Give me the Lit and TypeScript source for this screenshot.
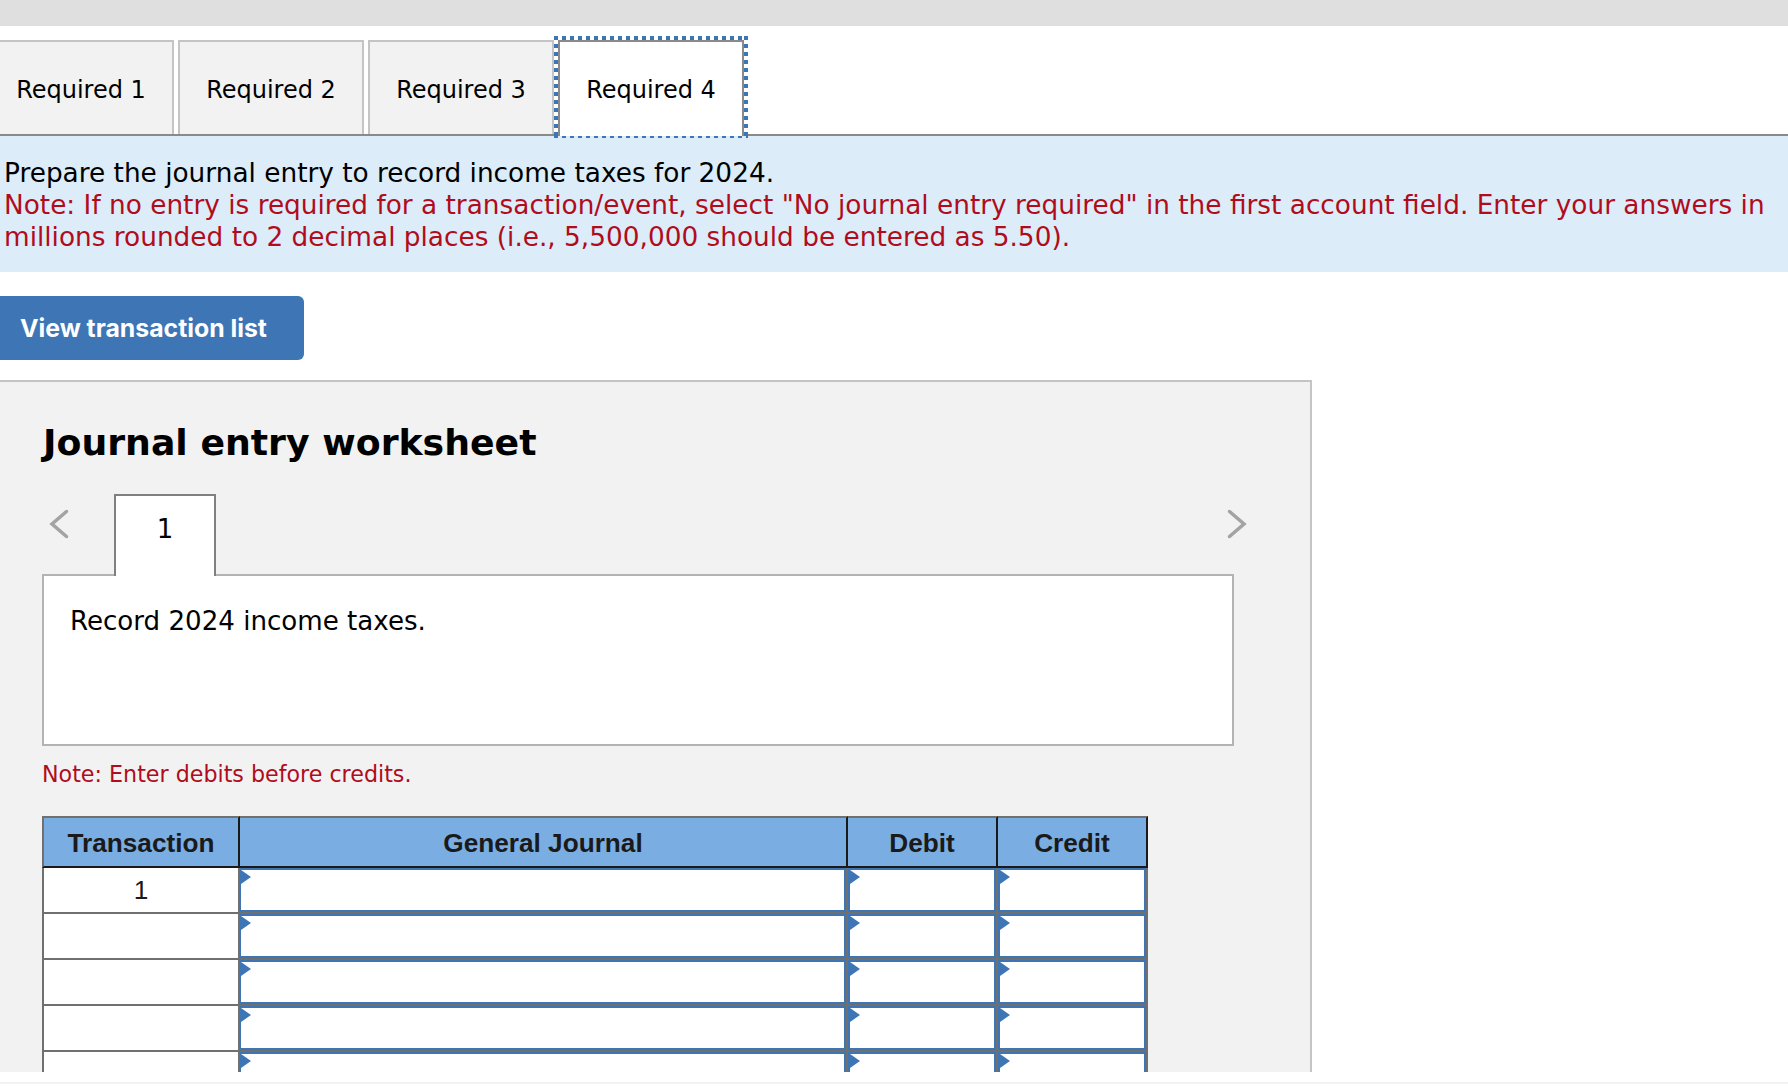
import { LitElement, html, css } from "lit";
import { customElement } from "lit/decorators.js";

@customElement("app-root")
export class AppRoot extends LitElement {
  static styles = css`
    :host { display: block; font-family: "DejaVu Sans", Verdana, sans-serif; color: #000; background: #fff; height: 1090px; overflow: hidden; }
    .frame { height: 1072px; overflow: hidden; }
    .foot { margin-top: 10px; height: 2px; background: #f2f2f2; }
    .topbar { height: 26px; background: #dfdfdf; }
    .tabs { display: flex; gap: 4px; margin-top: 14px; margin-left: -12px; height: 94px; border-bottom: 2px solid #8a8a8a; box-sizing: content-box; }
    .tab { width: 186px; height: 94px; box-sizing: border-box; border: 2px solid #c4c4c4; border-bottom: none; background: #f2f2f2; font-size: 24px; display: flex; align-items: center; justify-content: center; padding-top: 3px; }
    .tab.active { position: relative; height: 96px; padding-bottom: 2px; background: #fff; border-color: #8a8a8a; z-index: 1; }
    .tab.active::after { content: ""; position: absolute; left: -6px; right: -6px; top: -6px; bottom: -2px;
      background:
        repeating-linear-gradient(90deg, #3d75b5 0 4px, transparent 4px 8px) top / 100% 4px no-repeat,
        repeating-linear-gradient(90deg, #3d75b5 0 4px, transparent 4px 8px) bottom / 100% 2px no-repeat,
        repeating-linear-gradient(180deg, #3d75b5 0 4px, transparent 4px 8px) left / 4px 100% no-repeat,
        repeating-linear-gradient(180deg, #3d75b5 0 4px, transparent 4px 8px) right / 4px 100% no-repeat; }
    .info { background: #dcecf9; padding: 21px 4px 19px 4px; font-size: 26.35px; line-height: 32px; }
    .red { color: #b00c1c; }
    .btn { display: flex; align-items: center; width: 304px; height: 64px; box-sizing: border-box; margin-top: 24px; padding-left: 20px; background: #3d75b5; color: #fff; border: none; border-radius: 0 6px 6px 0; font: 700 24.8px Inter, sans-serif; }
    .panel { margin-top: 20px; width: 1312px; box-sizing: border-box; background: #f2f2f2; border: 2px solid #c4c4c4; border-left: none; padding: 36px 0 40px 42px; }
    h2 { margin: 0 0 0 1px; font-size: 36.25px; line-height: 50px; font-weight: 700; }
    .pager { display: flex; align-items: flex-start; margin-top: 26px; width: 1204px; height: 80px; }
    .pager svg { width: 18px; height: 28px; margin-top: 16px; flex: none; overflow: visible; }
    .prev { margin-left: 8px; margin-right: 46px; }
    .next { margin-left: auto; }
    .num { width: 102px; height: 82px; flex: none; box-sizing: border-box; background: #fff; border: 2px solid #808080; border-bottom: none; text-align: center; font-size: 26px; line-height: 66px; position: relative; z-index: 1; }
    .box { width: 1192px; height: 172px; box-sizing: border-box; background: #fff; border: 2px solid #b3b3b3; padding: 29px 26px 27px; font-size: 26.1px; line-height: 32px; }
    .note { margin: 13px 0 0; font-size: 22.2px; line-height: 30px; }
    table { margin-top: 27px; border-collapse: separate; border-spacing: 0; table-layout: fixed; width: 1106px; background: #fff; font-family: "Liberation Sans", Arial, sans-serif; color: #1a1a1a; }
    th { height: 48px; box-sizing: content-box; padding: 2px 0 0; line-height: 46px; background: #7aade2; font-size: 26.2px; font-weight: 700; border-top: 2px solid #707070; border-right: 2px solid #1a1a1a; border-bottom: 2px solid #1a1a1a; }
    th { height: 46px; }
    th:first-child { border-left: 2px solid #707070; }
    td { height: 44px; padding: 0; border-right: 2px solid #707070; border-bottom: 2px solid #707070; text-align: center; font-size: 26.2px; }
    td:first-child { border-left: 2px solid #707070; }
    .field { position: relative; box-sizing: border-box; height: 44px; border: 2px solid #3d75b5; background: #fff; }
    .field.wide { border-left-width: 1px; }
    .field::before { content: ""; position: absolute; left: 0; top: 0; width: 10px; height: 14px; background: #3d75b5; clip-path: polygon(0 0, 100% 50%, 0 100%); }
  `;

  render() {
    const rows = ["1", "", "", "", "", ""];
    const chev = (d: string, cls: string) => html`<svg class=${cls} viewBox="0 0 18 28" fill="none" stroke="#a3a3a3" stroke-width="3.5" stroke-linecap="round" stroke-linejoin="miter"><path d=${d}></path></svg>`;
    return html`
      <div class="frame">
        <div class="topbar"></div>
        <div class="tabs">
          <div class="tab">Required 1</div>
          <div class="tab">Required 2</div>
          <div class="tab">Required 3</div>
          <div class="tab active">Required 4</div>
        </div>
        <div class="info">
          <div>Prepare the journal entry to record income taxes for 2024.</div>
          <div class="red">Note: If no entry is required for a transaction/event, select "No journal entry required" in the first account field. Enter your answers in millions rounded to 2 decimal places (i.e., 5,500,000 should be entered as 5.50).</div>
        </div>
        <button class="btn">View transaction list</button>
        <section class="panel">
          <h2>Journal entry worksheet</h2>
          <div class="pager">
            ${chev("M16.5 1.5 L2 14 L16.5 26.5", "prev")}
            <div class="num">1</div>
            ${chev("M1.5 1.5 L16 14 L1.5 26.5", "next")}
          </div>
          <div class="box">Record 2024 income taxes.</div>
          <p class="note red">Note: Enter debits before credits.</p>
          <table>
            <colgroup><col style="width:198px" /><col style="width:608px" /><col style="width:150px" /><col style="width:150px" /></colgroup>
            <thead><tr><th>Transaction</th><th>General Journal</th><th>Debit</th><th>Credit</th></tr></thead>
            <tbody>
              ${rows.map((r) => html`<tr><td>${r}</td><td><div class="field wide"></div></td><td><div class="field"></div></td><td><div class="field"></div></td></tr>`)}
            </tbody>
          </table>
        </section>
      </div>
      <div class="foot"></div>
    `;
  }
}
